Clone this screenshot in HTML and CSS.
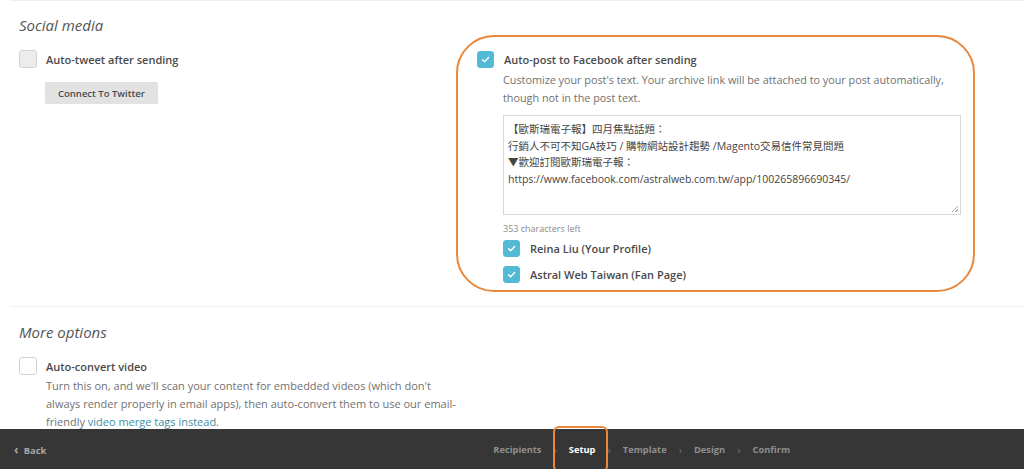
FILE: index.html
```html
<!DOCTYPE html>
<html lang="en">
<head>
    <meta charset="UTF-8">
    <meta name="viewport" content="width=device-width, initial-scale=1.0">
    <title>Campaign Setup</title>
    <link rel="stylesheet" href="styles.css">
</head>
<body>
    <div class="page">
        <section class="block social">
            <h3>Social media</h3>
            <div class="cols">
                <div class="col left">
                    <label class="check">
                        <span class="box"></span>
                        <span class="label">Auto-tweet after sending</span>
                    </label>
                    <button class="btn">Connect To Twitter</button>
                </div>

                <div class="col fb">
                    <label class="check">
                        <span class="box on small"><svg viewBox="0 0 10 10"><path d="M2.3 5.2 L4.2 7 L7.8 3.2"/></svg></span>
                        <span class="label">Auto-post to Facebook after sending</span>
                    </label>
                    <div class="fb-body">
                        <p class="desc">Customize your post's text. Your archive link will be attached to your post automatically, though not in the post text.</p>
                        <div class="post-text">【歐斯瑞電子報】四月焦點話題：<br>行銷人不可不知GA技巧 / 購物網站設計趨勢 /Magento交易信件常見問題<br>▼歡迎訂閱歐斯瑞電子報：<br>https://www.facebook.com/astralweb.com.tw/app/100265896690345/<span class="grip"></span></div>
                        <div class="count">353 characters left</div>
                        <label class="check page-check">
                            <span class="box on small"><svg viewBox="0 0 10 10"><path d="M2.3 5.2 L4.2 7 L7.8 3.2"/></svg></span>
                            <span class="label">Reina Liu (Your Profile)</span>
                        </label>
                        <label class="check page-check">
                            <span class="box on small"><svg viewBox="0 0 10 10"><path d="M2.3 5.2 L4.2 7 L7.8 3.2"/></svg></span>
                            <span class="label">Astral Web Taiwan (Fan Page)</span>
                        </label>
                    </div>
                </div>
            </div>
        </section>

        <section class="block more">
            <h3>More options</h3>
            <label class="check">
                <span class="box white"></span>
                <span class="label">Auto-convert video</span>
            </label>
            <p class="desc video-desc">Turn this on, and we'll scan your content for embedded videos (which don't always render properly in email apps), then auto-convert them to use our email-friendly <a href="#">video merge tags instead</a>.</p>
        </section>
    </div>

    <footer class="wizard">
        <a class="back" href="#"><span class="chev">&lsaquo;</span> Back</a>
        <nav class="steps">
            <span class="step">Recipients</span>
            <span class="sep">&rsaquo;</span>
            <span class="step current">Setup</span>
            <span class="sep">&rsaquo;</span>
            <span class="step">Template</span>
            <span class="sep">&rsaquo;</span>
            <span class="step">Design</span>
            <span class="sep">&rsaquo;</span>
            <span class="step">Confirm</span>
        </nav>
    </footer>
</body>
</html>
```

FILE: styles.css
```css
body {
    margin: 0;
    height: 469px;
    overflow: hidden;
    display: flex;
    flex-direction: column;
    font-family: "Open Sans", Arial, sans-serif;
    background-color: #fff;
    color: #4a4a4a;
}
.page {
    flex: 1;
    overflow: hidden;
}
.block {
    margin-left: 10px;
    padding-left: 9px;
    border-top: 1px solid #efefef;
}
h3 {
    margin: 0;
    font-size: 15px;
    font-style: italic;
    font-weight: 400;
    line-height: 20px;
    color: #555;
}
.social {
    padding-top: 14px;
}
.cols {
    display: flex;
}
.col.left {
    width: 437px;
    padding-top: 15px;
}
.check {
    display: flex;
    align-items: center;
    gap: 9px;
}
.check .label {
    font-size: 11px;
    font-weight: 600;
    color: #4a4a4a;
}
.box {
    width: 16px;
    height: 16px;
    flex: none;
    border: 1px solid #d2d2d2;
    border-radius: 3px;
    background-color: #ececec;
    display: flex;
    align-items: center;
    justify-content: center;
}
.box.white {
    background-color: #fff;
}
.box.on {
    border-color: #52bad5;
    background-color: #52bad5;
}
.box.small {
    width: 15px;
    height: 15px;
}
.box svg {
    width: 11px;
    height: 11px;
}
.box svg path {
    fill: none;
    stroke: #fff;
    stroke-width: 1.3;
    stroke-linecap: round;
    stroke-linejoin: round;
}
.btn {
    margin: 14px 0 0 26px;
    height: 22px;
    padding: 0 13px;
    border: none;
    border-radius: 1px;
    background-color: #e2e2e2;
    font-family: "Open Sans", Arial, sans-serif;
    font-size: 9.5px;
    font-weight: 600;
    color: #4a4a4a;
}
.fb {
    width: 484px;
    height: 221px;
    padding: 14px 12px 18px 19px;
    border: 2px solid #e9883c;
    border-radius: 38px;
}
.fb .check {
    gap: 10px;
}
.fb-body {
    padding-left: 26px;
}
.desc {
    margin: 3px 0 0;
    font-size: 10.8px;
    line-height: 18px;
    color: #717171;
}
.post-text {
    position: relative;
    margin-top: 8px;
    height: 88px;
    padding: 5px 5px 5px 4px;
    border: 1px solid #d8d8d8;
    font-family: "Open Sans", "Noto Sans CJK TC", sans-serif;
    font-size: 10.5px;
    line-height: 16.7px;
    color: #444;
}
.grip {
    position: absolute;
    right: 2px;
    bottom: 2px;
    width: 6px;
    height: 6px;
    background: linear-gradient(135deg, transparent 45%, #aaa 45%, #aaa 55%, transparent 55%, transparent 75%, #aaa 75%, #aaa 85%, transparent 85%);
}
.count {
    margin-top: 7px;
    font-size: 9px;
    line-height: 14px;
    color: #8a8a8a;
}
.page-check {
    margin-top: 4px;
}
.page-check + .page-check {
    margin-top: 9px;
}
.more {
    margin-top: 14px;
    padding-top: 15px;
}
.more .check {
    margin-top: 15px;
}
.video-desc {
    margin: 2px 0 0 27px;
    width: 420px;
    font-size: 11px;
}
.video-desc a {
    color: #3d8fa6;
    text-decoration: none;
}
.wizard {
    position: relative;
    height: 40px;
    flex: none;
    display: flex;
    align-items: center;
    background-color: #363636;
    font-size: 9.3px;
    font-weight: 700;
}
.back {
    margin-left: 14px;
    color: #a9a9a9;
    text-decoration: none;
}
.back .chev {
    margin-right: 3px;
    font-size: 12px;
}
.steps {
    margin-left: 447px;
    display: flex;
    align-items: center;
    gap: 12px;
    color: #8f8f8f;
}
.sep {
    color: #777;
    font-weight: 400;
    font-size: 11px;
}
.step.current {
    position: relative;
    color: #fff;
}
.step.current::after {
    content: "";
    position: absolute;
    left: -16px;
    right: -13px;
    top: -17px;
    bottom: -16px;
    border: 2px solid #e9883c;
    border-radius: 6px;
}
```
